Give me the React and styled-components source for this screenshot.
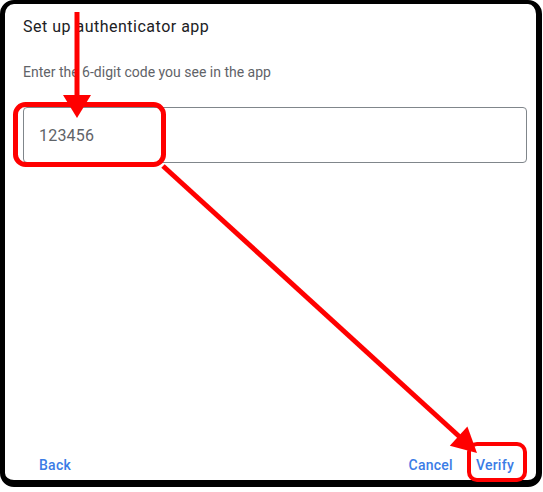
import React from 'react';
import styled, { createGlobalStyle } from 'styled-components';

const GlobalStyle = createGlobalStyle`
  html, body {
    margin: 0;
    padding: 0;
    background: #fff;
    font-family: Roboto, "Noto Sans", Arial, sans-serif;
  }
`;

const Page = styled.div`
  position: relative;
  width: 543px;
  height: 492px;
  overflow: hidden;
`;

const Frame = styled.div`
  box-sizing: border-box;
  width: 542px;
  height: 487px;
  border-style: solid;
  border-color: #000;
  border-width: 4px 6px 7px 5px;
  border-radius: 14px;
  display: flex;
  flex-direction: column;
  background: #fff;
`;

const Body = styled.div`
  flex: 1;
  padding: 11px 9px 0 18px;
`;

const Title = styled.h2`
  margin: 0;
  font-size: 16px;
  line-height: 24px;
  font-weight: 400;
  letter-spacing: 0.5px;
  color: #202124;
`;

const Hint = styled.p`
  margin: 23px 0 0;
  font-size: 14px;
  line-height: 20px;
  color: #5f6368;
`;

const CodeInput = styled.div`
  box-sizing: border-box;
  margin-top: 25px;
  height: 56px;
  border: 1px solid #80868b;
  border-radius: 4px;
  padding: 0 15px;
  display: flex;
  align-items: center;
  font-size: 16px;
  color: #5f6368;
  letter-spacing: 0.2px;
`;

const Footer = styled.div`
  display: flex;
  align-items: center;
  padding: 0 14px 0 26px;
`;

const Spacer = styled.div`
  flex: 1;
`;

const TextButton = styled.button`
  border: none;
  background: none;
  height: 30px;
  padding: 0 8px;
  margin-left: ${(p) => (p.$gap ? '7px' : '0')};
  font-family: inherit;
  font-size: 14px;
  font-weight: 500;
  letter-spacing: 0.25px;
  color: #3b7ce6;
`;

const Markup = styled.svg`
  position: absolute;
  top: 0;
  left: 0;
  pointer-events: none;
`;

const RED = '#ff0000';

const Annotations = () => (
  <Markup width="543" height="492" viewBox="0 0 543 492">
    <line x1="77" y1="12" x2="77" y2="100" stroke={RED} strokeWidth="5" />
    <polygon points="63,95 91,95 77,118" fill={RED} />
    <rect x="15.5" y="104.5" width="148" height="60" rx="10" fill="none" stroke={RED} strokeWidth="5" />
    <line x1="163" y1="166" x2="462" y2="439" stroke={RED} strokeWidth="5" />
    <polygon points="449.8,445.7 467.4,426.5 477,453" fill={RED} />
    <rect x="469" y="444" width="56" height="36" rx="8" fill="none" stroke={RED} strokeWidth="4" />
  </Markup>
);

const App = () => (
  <Page>
    <GlobalStyle />
    <Frame>
      <Body>
        <Title>Set up authenticator app</Title>
        <Hint>Enter the 6-digit code you see in the app</Hint>
        <CodeInput>123456</CodeInput>
      </Body>
      <Footer>
        <TextButton>Back</TextButton>
        <Spacer />
        <TextButton>Cancel</TextButton>
        <TextButton $gap>Verify</TextButton>
      </Footer>
    </Frame>
    <Annotations />
  </Page>
);

export default App;
